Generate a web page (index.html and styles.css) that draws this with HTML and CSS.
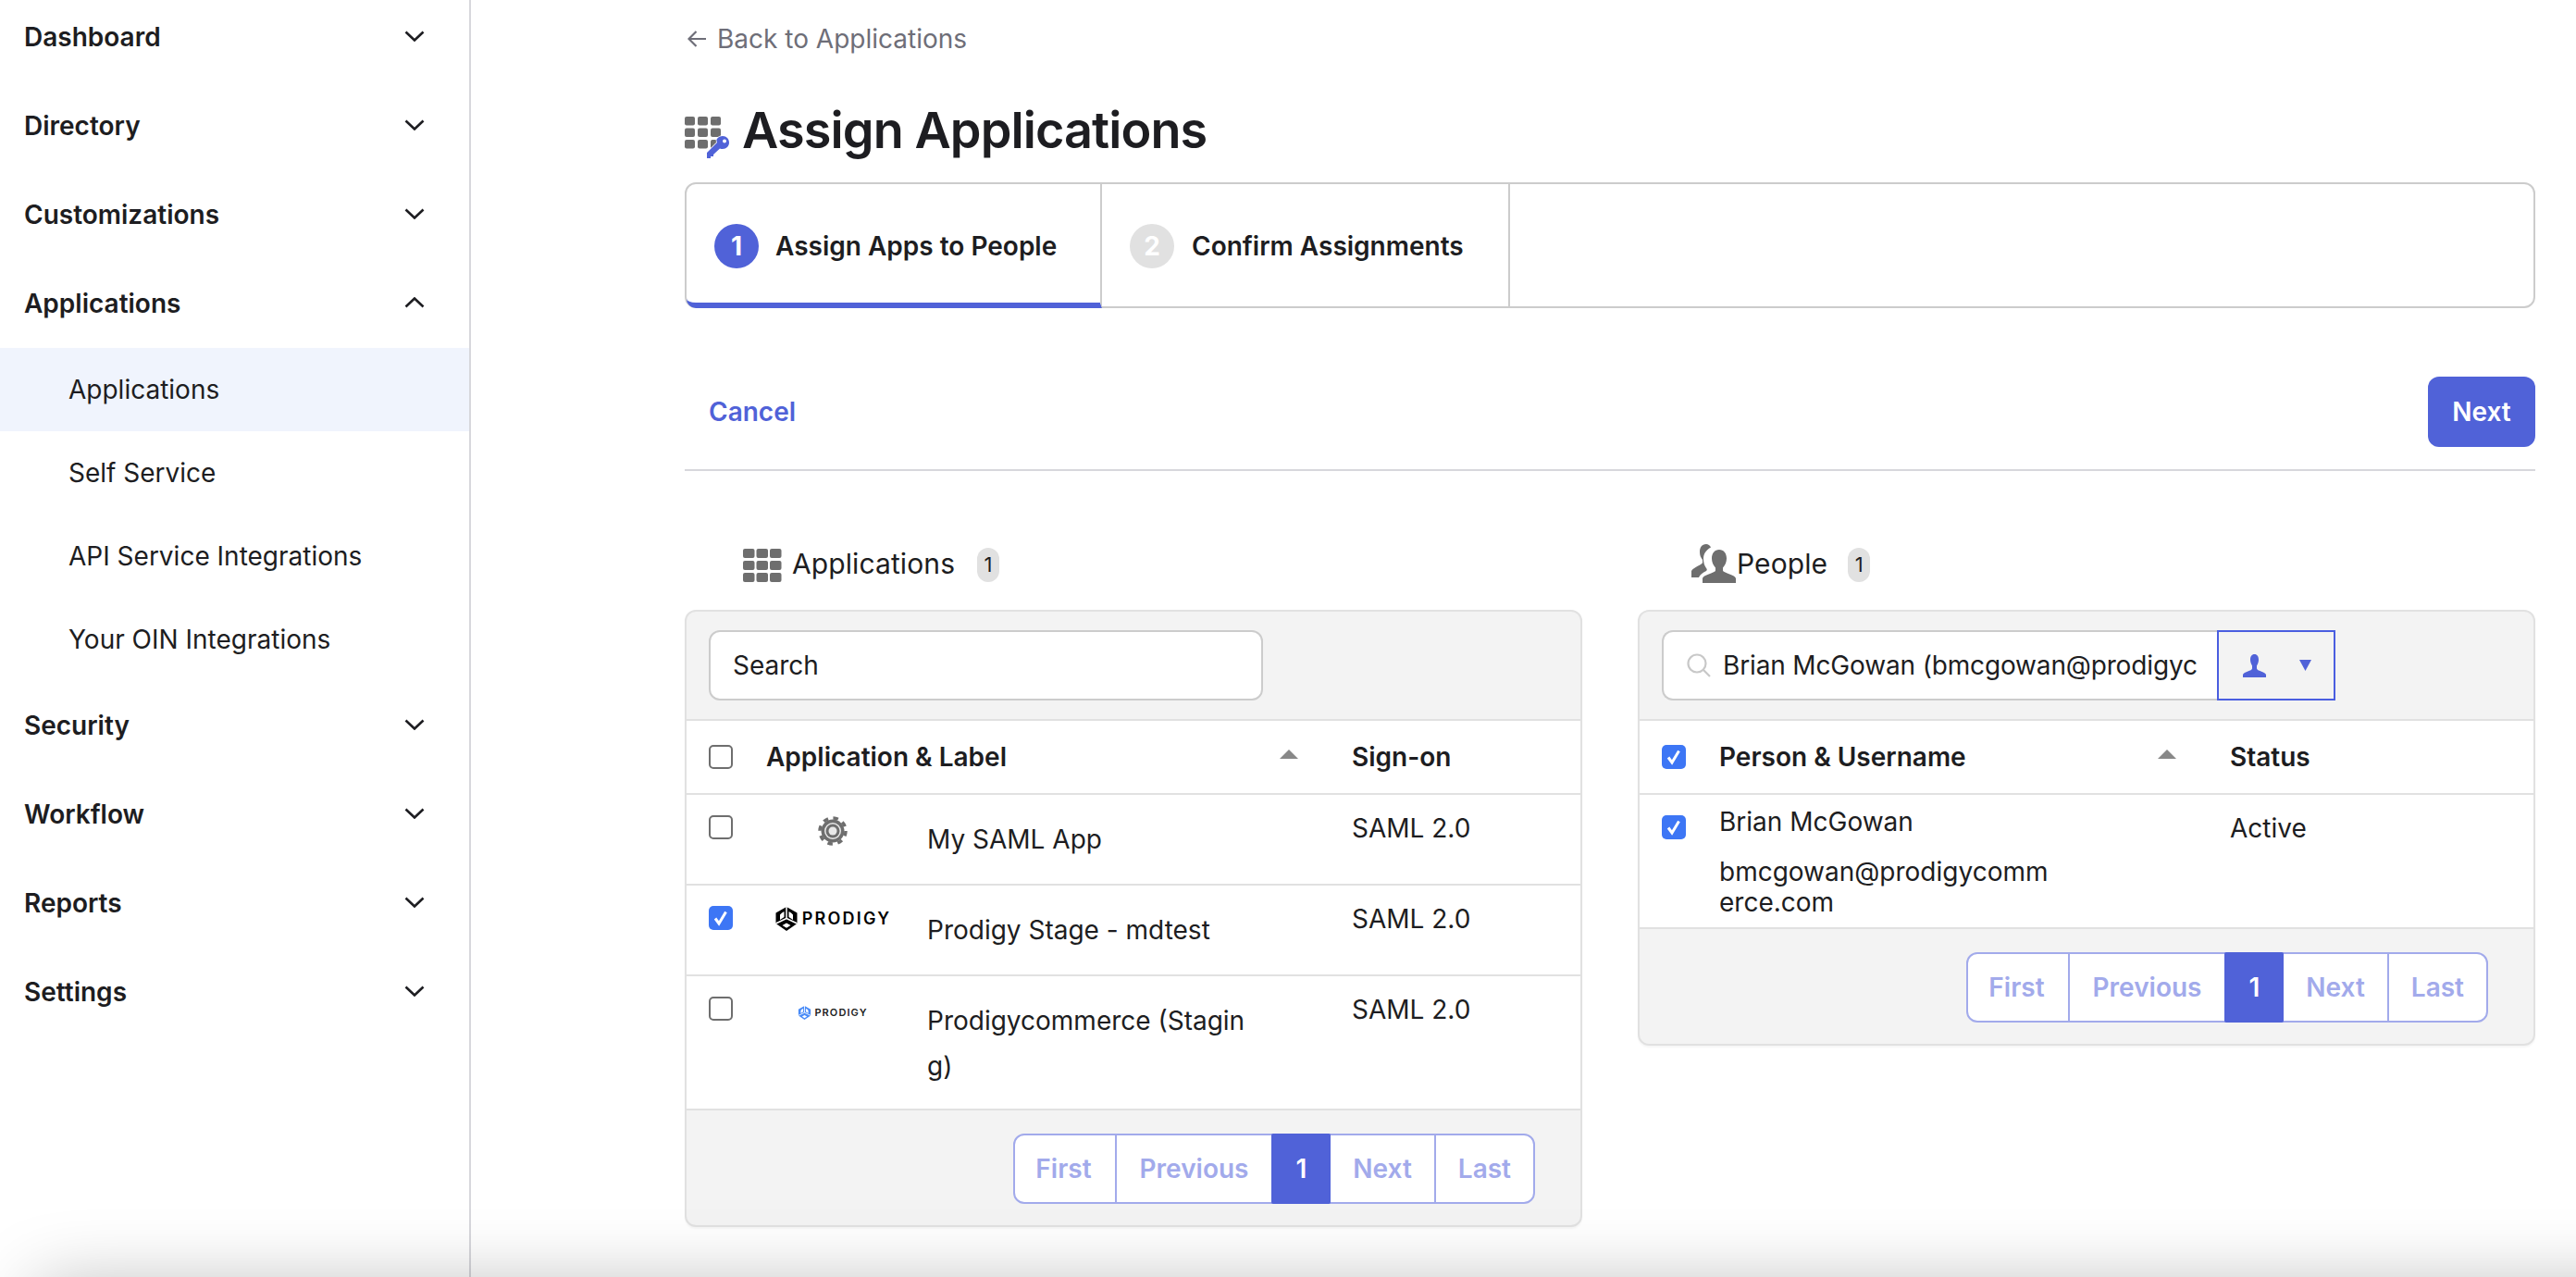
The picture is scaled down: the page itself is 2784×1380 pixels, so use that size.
FILE: index.html
```
<!DOCTYPE html>
<html lang="en">
<head>
<meta charset="utf-8">
<title>Assign Applications</title>
<link rel="stylesheet" href="styles.css">
</head>
<body>
<aside class="sidebar">
  <nav class="nav">
    <a class="nav-item">Dashboard<svg class="chev" viewBox="0 0 22 12"><path d="M1.5 1.5 11 10.5 20.5 1.5"/></svg></a>
    <a class="nav-item">Directory<svg class="chev" viewBox="0 0 22 12"><path d="M1.5 1.5 11 10.5 20.5 1.5"/></svg></a>
    <a class="nav-item">Customizations<svg class="chev" viewBox="0 0 22 12"><path d="M1.5 1.5 11 10.5 20.5 1.5"/></svg></a>
    <a class="nav-item open">Applications<svg class="chev" viewBox="0 0 22 12"><path d="M1.5 10.5 11 1.5 20.5 10.5"/></svg></a>
    <div class="subnav">
      <a class="sub-item active">Applications</a>
      <a class="sub-item">Self Service</a>
      <a class="sub-item">API Service Integrations</a>
      <a class="sub-item">Your OIN Integrations</a>
    </div>
    <a class="nav-item">Security<svg class="chev" viewBox="0 0 22 12"><path d="M1.5 1.5 11 10.5 20.5 1.5"/></svg></a>
    <a class="nav-item">Workflow<svg class="chev" viewBox="0 0 22 12"><path d="M1.5 1.5 11 10.5 20.5 1.5"/></svg></a>
    <a class="nav-item">Reports<svg class="chev" viewBox="0 0 22 12"><path d="M1.5 1.5 11 10.5 20.5 1.5"/></svg></a>
    <a class="nav-item">Settings<svg class="chev" viewBox="0 0 22 12"><path d="M1.5 1.5 11 10.5 20.5 1.5"/></svg></a>
  </nav>
</aside>

<main class="main">
  <a class="back"><svg class="back-arrow" viewBox="0 0 20 18"><path d="M9.5 1 1.5 9l8 8M1.5 9H20"/></svg>Back to Applications</a>

  <h1 class="title">
    <svg class="title-icon" viewBox="0 0 48 46">
      <g class="grid-cells">
        <rect x="0" y="1" width="11" height="9.5" rx="2"/><rect x="14" y="1" width="11" height="9.5" rx="2"/><rect x="28" y="1" width="11" height="9.5" rx="2"/>
        <rect x="0" y="13.5" width="11" height="9.5" rx="2"/><rect x="14" y="13.5" width="11" height="9.5" rx="2"/><rect x="28" y="13.5" width="11" height="9.5" rx="2"/>
        <rect x="0" y="26" width="11" height="9.5" rx="2"/><rect x="14" y="26" width="11" height="9.5" rx="2"/><rect x="28" y="26" width="11" height="9.5" rx="2"/>
      </g>
      <path class="key" fill-rule="evenodd" d="M41 22c4 0 7 3 7 7 0 4-3 7-7 7-1 0-2 0-3-.6L31 42v2h-3v2h-4v-6l11-11c-.4-.8-.6-1.600-.6-2.400C34.400 25 37 22 41 22zm2 3.500a2 2 0 1 0 0 4 2 2 0 0 0 0-4z"/>
    </svg>
    Assign Applications
  </h1>

  <div class="tabs">
    <div class="tab active"><span class="step">1</span>Assign Apps to People</div>
    <div class="tab second"><span class="step muted">2</span>Confirm Assignments</div>
  </div>

  <div class="actions">
    <a class="cancel">Cancel</a>
    <button class="next-btn" type="button">Next</button>
  </div>

  <div class="columns">
    <section class="col">
      <div class="col-head apps-head">
        <svg class="apps-icon" viewBox="0 0 42 36">
          <g class="grid-cells">
            <rect x="0" y="0" width="12.500" height="10" rx="2"/><rect x="14.500" y="0" width="12.500" height="10" rx="2"/><rect x="29" y="0" width="12.500" height="10" rx="2"/>
            <rect x="0" y="13" width="12.500" height="10" rx="2"/><rect x="14.500" y="13" width="12.500" height="10" rx="2"/><rect x="29" y="13" width="12.500" height="10" rx="2"/>
            <rect x="0" y="26" width="12.500" height="10" rx="2"/><rect x="14.500" y="26" width="12.500" height="10" rx="2"/><rect x="29" y="26" width="12.500" height="10" rx="2"/>
          </g>
        </svg>
        <span class="col-name">Applications</span><span class="badge">1</span>
      </div>
      <div class="panel">
        <div class="toolbar"><div class="search plain">Search</div></div>
        <div class="grid apps">
          <div class="row head">
            <div class="cell-check"><span class="check"></span></div>
            <div class="cell-main">Application &amp; Label<i class="sort"></i></div>
            <div class="cell-last">Sign-on</div>
          </div>
          <div class="row">
            <div class="cell-check"><span class="check"></span></div>
            <div class="cell-main app">
              <div class="logo">
                <svg class="gear" viewBox="0 0 32 32">
                  <circle cx="16" cy="16" r="14" class="gear-teeth"/>
                  <circle cx="16" cy="16" r="12.500" class="gear-body"/>
                  <circle cx="16" cy="16" r="9" class="gear-gap"/>
                  <circle cx="16" cy="16" r="7.500" class="gear-body"/>
                  <circle cx="16" cy="16" r="4.500" class="gear-gap"/>
                </svg>
              </div>
              <div class="app-name">My SAML App</div>
            </div>
            <div class="cell-last plain-cell">SAML 2.0</div>
          </div>
          <div class="row">
            <div class="cell-check"><span class="check on"><svg viewBox="0 0 26 26"><path d="M7 13.500 11 19 18.500 6.500"/></svg></span></div>
            <div class="cell-main app">
              <div class="logo raised">
                <span class="brand">
                  <svg class="brand-mark" viewBox="0 0 26 26">
                    <path d="M13 0 24.500 6.500V18L13 26 1.500 18V6.500z"/>
                    <path class="cut" d="M13 0v12.500M13 12.500 1.500 18M13 12.500 24.500 18"/>
                    <path class="hole" d="M8 6.500 10.500 5v6L6 14V8.500zM18 6.500 15.500 5v6L20 14V8.500zM13 17.500l4.500 2.500-4.500 2.800L8.500 20z"/>
                  </svg>
                  <span class="brand-text">PRODIGY</span>
                </span>
              </div>
              <div class="app-name">Prodigy Stage - mdtest</div>
            </div>
            <div class="cell-last plain-cell">SAML 2.0</div>
          </div>
          <div class="row tall">
            <div class="cell-check"><span class="check"></span></div>
            <div class="cell-main app">
              <div class="logo">
                <span class="brand small">
                  <svg class="brand-mark" viewBox="0 0 26 26">
                    <path d="M13 0 24.500 6.500V18L13 26 1.500 18V6.500z"/>
                    <path class="cut" d="M13 0v12.500M13 12.500 1.500 18M13 12.500 24.500 18"/>
                    <path class="hole" d="M8 6.500 10.500 5v6L6 14V8.500zM18 6.500 15.500 5v6L20 14V8.500zM13 17.500l4.500 2.500-4.500 2.800L8.500 20z"/>
                  </svg>
                  <span class="brand-text">PRODIGY</span>
                </span>
              </div>
              <div class="app-name">Prodigycommerce (Staging)</div>
            </div>
            <div class="cell-last plain-cell">SAML 2.0</div>
          </div>
        </div>
        <div class="pager-bar">
          <div class="pager"><a class="pg">First</a><a class="pg">Previous</a><a class="pg current">1</a><a class="pg">Next</a><a class="pg">Last</a></div>
        </div>
      </div>
    </section>

    <section class="col">
      <div class="col-head people-head">
        <svg class="people-icon" viewBox="0 0 48 42">
          <path d="M30 6c-5 0-8 4-8 9.500 0 4 1.500 7 4 10v3c0 2.500-13 4.500-14 8.500v5h36v-5c-1-4-14-6-14-8.500v-3c2.500-3 4-6 4-10C38 10 35 6 30 6z"/>
          <path d="M16 0c-5 0-7 4-7 8.500 0 3.500 1 6 3 8.500v3c0 2-10 5-12 9v7h8c1-3 4-5 8-7 1-1 1-2 0-3-2-3-3-6-3-10 0-5 2-9 8-12.500C20 1.500 18 0 16 0z"/>
        </svg>
        <span class="col-name">People</span><span class="badge">1</span>
      </div>
      <div class="panel">
        <div class="toolbar">
          <div class="search-group">
            <div class="search icon">
              <svg class="search-icon" viewBox="0 0 26 26"><circle cx="11" cy="11" r="9.500"/><path d="M18 18l7 7"/></svg>
              <span class="search-value">Brian McGowan (bmcgowan@prodigyc</span>
            </div>
            <div class="filter">
              <svg class="person-icon" viewBox="0 0 25 25"><path d="M12.500 0C9.500 0 8 2.500 8 6c0 2.500 1 4.500 2 6.500v3C10 18 1 19 0 22v3h25v-3c-1-3-10-4-10-6.500v-3c1-2 2-4 2-6.500 0-3.500-1.500-6-4.500-6z"/></svg>
              <svg class="caret" viewBox="0 0 13 12"><path d="M0 0h13L6.500 12z"/></svg>
            </div>
          </div>
        </div>
        <div class="grid people">
          <div class="row head">
            <div class="cell-check"><span class="check on"><svg viewBox="0 0 26 26"><path d="M7 13.500 11 19 18.500 6.500"/></svg></span></div>
            <div class="cell-main">Person &amp; Username<i class="sort"></i></div>
            <div class="cell-last">Status</div>
          </div>
          <div class="row person">
            <div class="cell-check"><span class="check on"><svg viewBox="0 0 26 26"><path d="M7 13.500 11 19 18.500 6.500"/></svg></span></div>
            <div class="cell-main user">
              <div class="user-name">Brian McGowan</div>
              <div class="user-mail">bmcgowan@prodigycommerce.com</div>
            </div>
            <div class="cell-last plain-cell">Active</div>
          </div>
        </div>
        <div class="pager-bar">
          <div class="pager"><a class="pg">First</a><a class="pg">Previous</a><a class="pg current">1</a><a class="pg">Next</a><a class="pg">Last</a></div>
        </div>
      </div>
    </section>
  </div>
</main>
<div class="bottom-shade"></div>
</body>
</html>
```
FILE: styles.css
```
* { box-sizing: border-box; }
html, body { height: 100%; }
body {
  margin: 0;
  display: flex;
  overflow: hidden;
  background: #fff;
  color: #1d1d21;
  font-family: Inter, "Liberation Sans", sans-serif;
  font-size: 28px;
}
a { display: block; }

/* Sidebar */
.sidebar {
  flex: 0 0 509px;
  height: 1380px;
  border-right: 2px solid #d7d7dc;
}
.nav { display: flex; flex-direction: column; }
.nav-item {
  display: flex;
  align-items: center;
  justify-content: space-between;
  height: 80px;
  margin-bottom: 16px;
  padding: 0 48px 0 26px;
  font-weight: 600;
  font-size: 28px;
}
.nav-item.open { margin-bottom: 8px; }
.chev { width: 22px; height: 12px; fill: none; stroke: #1d1d21; stroke-width: 2.600; margin-top: -3px; }
.subnav { margin-bottom: 8px; }
.sub-item {
  display: flex;
  align-items: center;
  height: 90px;
  padding-left: 74px;
  font-size: 28px;
}
.sub-item.active { background: #f0f4fd; }

/* Main */
.main { flex: 1; padding: 22px 44px 0 231px; min-width: 0; }
.back {
  display: flex;
  align-items: center;
  height: 40px;
  color: #6e6e78;
  font-size: 28px;
}
.back-arrow { width: 20px; height: 18px; margin: 0 12px 0 3px; fill: none; stroke: #6e6e78; stroke-width: 2.200; }
.title {
  display: flex;
  align-items: center;
  height: 72px;
  margin: 42px 0 21px;
  font-size: 54px;
  font-weight: 600;
  letter-spacing: -0.9px;
}
.title-icon { width: 48px; height: 46px; margin: 16px 14px 0 0; flex: none; }
.grid-cells { fill: #6e6e6e; }
.key { fill: #5062d8; stroke: #fff; stroke-width: 1.500; paint-order: stroke; }

.tabs {
  display: flex;
  height: 136px;
  border: 2px solid #ccc;
  border-radius: 12px;
}
.tab {
  display: flex;
  align-items: center;
  height: 134px;
  padding-left: 30px;
  font-weight: 600;
  font-size: 28px;
  border-right: 2px solid #ccc;
}
.tab.active {
  width: 449px;
  margin-bottom: -2px;
  height: 134px;
  border-bottom: 6px solid #5062d8;
  padding-top: 6px;
  border-bottom-left-radius: 10px;
}
.tab.second { width: 441px; padding-left: 30px; }
.step {
  display: flex;
  align-items: center;
  justify-content: center;
  width: 48px;
  height: 48px;
  margin-right: 18px;
  border-radius: 50%;
  background: #5062d8;
  color: #fff;
  font-weight: 700;
}
.step.muted { background: #e1e1e1; margin-right: 19px; }

.actions {
  display: flex;
  align-items: center;
  justify-content: space-between;
  margin-top: 74px;
  padding: 0 0 24px 26px;
  border-bottom: 2px solid #d7d7dc;
}
.cancel { color: #5062d8; font-weight: 600; font-size: 28px; }
.next-btn {
  width: 116px;
  height: 76px;
  border: 0;
  border-radius: 12px;
  background: #5062d8;
  color: #fff;
  font: 600 28px Inter, "Liberation Sans", sans-serif;
}

.columns {
  display: grid;
  grid-template-columns: 970px 970px;
  gap: 60px;
  align-items: start;
  margin-top: 83px;
}
.col-head { display: flex; align-items: center; height: 37px; margin-bottom: 30px; }
.apps-head { padding-left: 63px; }
.people-head { padding-left: 58px; }
.apps-icon { width: 42px; height: 36px; margin-right: 11px; flex: none; }
.people-icon { width: 48px; height: 42px; margin: -4px 1px 0 0; flex: none; fill: #6e6e6e; }
.col-name { font-size: 30px; letter-spacing: 0.1px; margin-top: -4px; }
.badge {
  width: 24px;
  height: 37px;
  margin-left: 24px;
  border-radius: 12px;
  background: #e1e1e1;
  font-size: 22px;
  line-height: 37px;
  text-align: center;
}
.people-head .badge { margin-left: 22px; }

.panel {
  border: 2px solid #e1e1e1;
  border-radius: 12px;
  background: #f3f3f3;
  box-shadow: 0 2px 2px rgba(0, 0, 0, .04);
}
.toolbar { height: 116px; padding: 20px 24px; }
.search {
  height: 76px;
  display: flex;
  align-items: center;
  border: 2px solid #ccc;
  background: #fff;
  font-size: 28px;
}
.search.plain { width: 599px; padding-left: 24px; border-radius: 12px; color: #1d1d21; }
.search-group { display: flex; }
.search.icon {
  width: 600px;
  padding: 0 0 0 25px;
  border-right: 0;
  border-radius: 12px 0 0 12px;
}
.search-icon { width: 26px; height: 26px; flex: none; margin-right: 13px; fill: none; stroke: #c8c8c8; stroke-width: 2.200; }
.search-value { white-space: nowrap; letter-spacing: -0.15px; }
.filter {
  display: flex;
  align-items: center;
  width: 128px;
  height: 76px;
  padding-left: 26px;
  border: 2px solid #4a5ee0;
}
.person-icon { width: 25px; height: 25px; fill: #5062d8; }
.caret { width: 13px; height: 12px; margin-left: 36px; fill: #5062d8; }

.grid { background: #fff; border-top: 2px solid #e1e1e1; }
.row {
  display: grid;
  min-height: 98px;
  border-bottom: 2px solid #e1e1e1;
}
.apps .row { grid-template-columns: 62px 634px 1fr; }
.people .row { grid-template-columns: 62px 553px 1fr; }
.row.tall { min-height: 145px; }
.row.person { min-height: 145px; }
.row.head { min-height: 80px; font-weight: 600; align-items: center; }
.row.head .cell-check { padding-top: 0; }
.cell-check { padding: 22px 0 0 24px; line-height: 0; }
.check {
  display: inline-block;
  width: 26px;
  height: 26px;
  border: 2px solid #6e6e6e;
  border-radius: 5px;
  background: #fff;
}
.check.on { border: 0; background: #3d76f5; }
.check svg { width: 26px; height: 26px; fill: none; stroke: #fff; stroke-width: 3; display: block; }
.cell-main { padding-left: 24px; position: relative; }
.cell-last { padding-left: 23px; }
.plain-cell { padding-top: 18px; line-height: 36px; }
.sort {
  position: absolute;
  right: 35px;
  top: 50%;
  margin-top: -8px;
  width: 0;
  height: 0;
  border-left: 10px solid transparent;
  border-right: 10px solid transparent;
  border-bottom: 10px solid #888;
}
.app { display: flex; align-items: flex-start; padding-top: 24px; padding-bottom: 20px; }
.logo {
  flex: none;
  width: 144px;
  height: 30px;
  display: flex;
  align-items: center;
  justify-content: center;
}
.logo.raised { padding-bottom: 6px; }
.gear { width: 32px; height: 32px; }
.gear-teeth { fill: none; stroke: #6e6e6e; stroke-width: 3.500; stroke-dasharray: 5.500 5.500; }
.gear-body { fill: #6e6e6e; }
.gear-gap { fill: #e8e8e8; }
.brand { display: flex; align-items: center; gap: 4px; }
.brand-mark { width: 26px; height: 26px; fill: #000; flex: none; }
.cut { fill: none; stroke: #fff; stroke-width: 1.500; }
.hole { fill: #fff; }
.brand-text { font-size: 18px; font-weight: 600; letter-spacing: 2.200px; line-height: 1; color: #000; }
.brand.small { gap: 3px; }
.brand.small .brand-mark { width: 15px; height: 15px; fill: #4a8cf7; }
.brand.small .brand-text { font-size: 11px; letter-spacing: 1.100px; color: #222; }
.app-name { width: 360px; margin-left: 30px; line-height: 49px; word-break: break-all; }
.user { padding-top: 11px; }
.user-name { line-height: 36px; }
.user-mail { width: 364px; margin-top: 20px; line-height: 33px; word-break: break-all; }

.pager-bar { display: flex; justify-content: flex-end; padding: 25px 49px 23px 0; }
.pager {
  display: flex;
  height: 76px;
  border: 2px solid #a2aaeb;
  border-radius: 12px;
  background: #fff;
}
.pg {
  display: flex;
  align-items: center;
  padding: 0 24px;
  color: #a2aaeb;
  font-weight: 600;
  border-left: 2px solid #a2aaeb;
}
.pg:first-child { border-left: 0; border-radius: 10px 0 0 10px; padding: 0 25px 0 22px; }
.pg:nth-child(2) { padding: 0 25px; }
.pg.current {
  margin: -2px 0;
  padding: 0 26px;
  background: #5062d8;
  color: #fff;
  border: 0;
  border-radius: 2px;
}
.pg.current + .pg { border-left: 0; }

.bottom-shade {
  position: fixed;
  left: 40px;
  right: -100px;
  top: 1390px;
  height: 100px;
  box-shadow: 0 0 80px rgba(0, 0, 0, .28);
  pointer-events: none;
}
```
